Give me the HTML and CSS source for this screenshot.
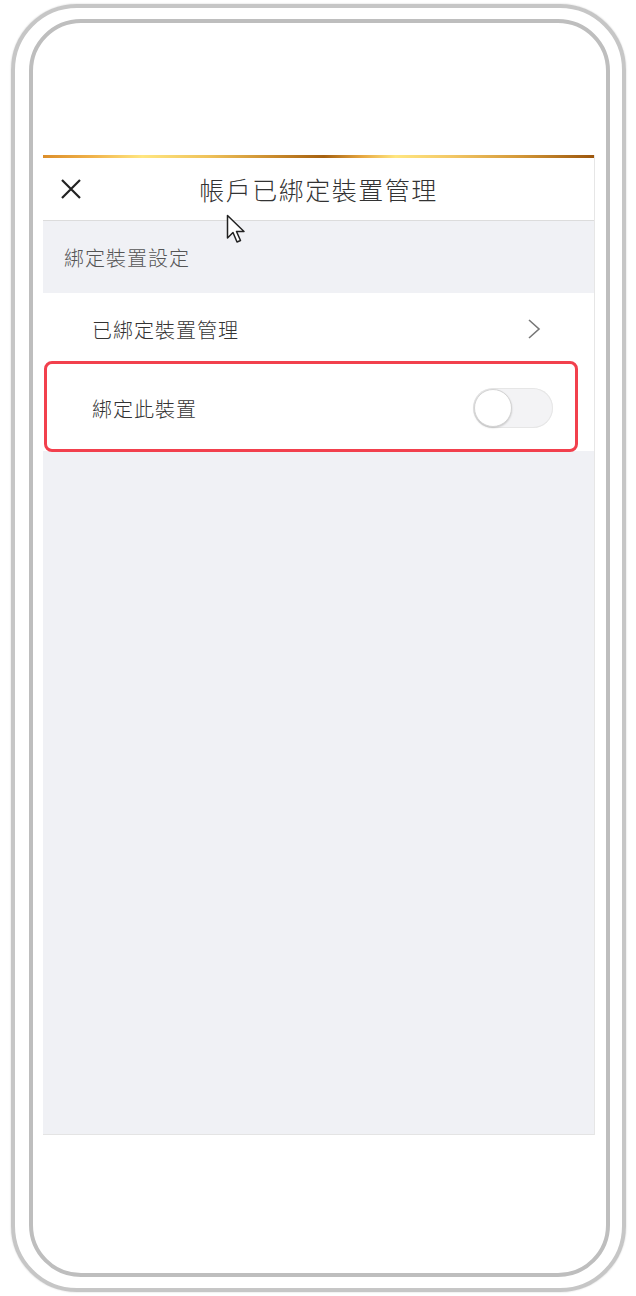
FILE: index.html
```html
<!DOCTYPE html>
<html lang="zh-Hant">
<head>
<meta charset="utf-8">
<title>帳戶已綁定裝置管理</title>
<link rel="stylesheet" href="styles.css">
</head>
<body>
<div class="phone-outer">
  <div class="phone-inner">
    <div class="screen">
      <div class="gold-bar"></div>
      <header class="topbar">
        <svg class="close" width="24" height="24" viewBox="0 0 24 24"><path d="M3 3 L21 21 M21 3 L3 21" stroke="#222" stroke-width="2.2" fill="none" stroke-linecap="butt"/></svg>
        <h1 class="title">帳戶已綁定裝置管理</h1>
      </header>
      <main class="content">
        <div class="section-label">綁定裝置設定</div>
        <div class="list">
          <div class="row row-first">
            <span class="row-text">已綁定裝置管理</span>
            <svg class="chevron" width="14" height="22" viewBox="0 0 14 22"><path d="M2 2 L12 11 L2 20" stroke="#777" stroke-width="1.6" fill="none"/></svg>
          </div>
          <div class="row row-second">
            <span class="row-text">綁定此裝置</span>
            <span class="toggle"><span class="knob"></span></span>
            <div class="highlight"></div>
          </div>
        </div>
      </main>
    </div>
  </div>
</div>
<svg class="cursor" width="22" height="32" viewBox="0 0 22 32"><path d="M1.5 1.5 L1.5 24 L7 18.5 L11 28 L14.5 26.5 L10.5 17.5 L18 17.5 Z" fill="#fff" stroke="#222" stroke-width="1.5" stroke-linejoin="round"/></svg>
</body>
</html>
```

FILE: styles.css
```css
html, body {
  margin: 0;
  padding: 0;
  background: #ffffff;
}
body {
  width: 636px;
  height: 1296px;
  position: relative;
  font-family: "Noto Sans CJK TC", "Noto Sans", sans-serif;
  box-sizing: border-box;
  padding: 4px 10px 4px 11px;
}
.phone-outer {
  box-sizing: border-box;
  height: 1288px;
  border: 4px solid #c6c6c6;
  border-radius: 66px;
  padding: 11px 12px 11px 14px;
  box-shadow: 0 0 2px rgba(0,0,0,0.2);
}
.phone-inner {
  box-sizing: border-box;
  height: 100%;
  border: 4px solid #bebebe;
  border-radius: 52px;
  padding: 132px 14px 0 10px;
}
.screen {
  width: 552px;
  display: flex;
  flex-direction: column;
  border-right: 1px solid #e6e6e6;
  box-sizing: border-box;
}
.gold-bar {
  height: 3px;
  background: linear-gradient(90deg, #dc8e2a 0%, #f0b24a 9%, #ffe680 18%, #efc25a 30%, #c98a2c 42%, #a5600f 51%, #e7a842 58%, #ffe680 64%, #f3c866 74%, #d59a3a 86%, #9c560c 100%);
}
.topbar {
  height: 62px;
  display: flex;
  align-items: center;
  position: relative;
  background: #fff;
  border-bottom: 1px solid #dcdcdc;
}
.close {
  margin-left: 16px;
  flex: none;
}
.title {
  position: absolute;
  left: 0;
  right: 0;
  margin: 0;
  text-align: center;
  font-size: 25px;
  font-weight: 300;
  color: #333;
  letter-spacing: 1.5px;
  pointer-events: none;
}
.content {
  height: 914px;
  background: #f0f1f5;
  border-bottom: 1px solid #e4e4e4;
  box-sizing: border-box;
}
.section-label {
  height: 72px;
  display: flex;
  align-items: center;
  padding-left: 21px;
  font-size: 20px;
  font-weight: 300;
  letter-spacing: 1px;
  color: #555;
}
.list {
  background: #fff;
}
.row {
  display: flex;
  align-items: center;
  justify-content: space-between;
  padding-left: 49px;
  position: relative;
}
.row-first {
  height: 72px;
  padding-right: 53px;
}
.row-second {
  height: 86px;
  padding-right: 41px;
}
.row-text {
  font-size: 20px;
  font-weight: 300;
  letter-spacing: 1px;
  color: #333;
}
.toggle {
  width: 80px;
  height: 40px;
  border-radius: 20px;
  background: #f3f3f5;
  box-shadow: inset 0 0 0 1px #e6e6e6;
  position: relative;
  display: block;
}
.knob {
  position: absolute;
  left: 1px;
  top: 1px;
  width: 36px;
  height: 36px;
  border-radius: 50%;
  background: #fff;
  border: 1px solid #d4d4d4;
  box-shadow: 0 1px 2px rgba(0,0,0,0.18);
}
.highlight {
  position: absolute;
  left: 1px;
  top: -4px;
  width: 534px;
  height: 91px;
  border: 3px solid #f2404d;
  border-radius: 8px;
  box-sizing: border-box;
  pointer-events: none;
}
.cursor {
  position: absolute;
  left: 226px;
  top: 214px;
}
```
